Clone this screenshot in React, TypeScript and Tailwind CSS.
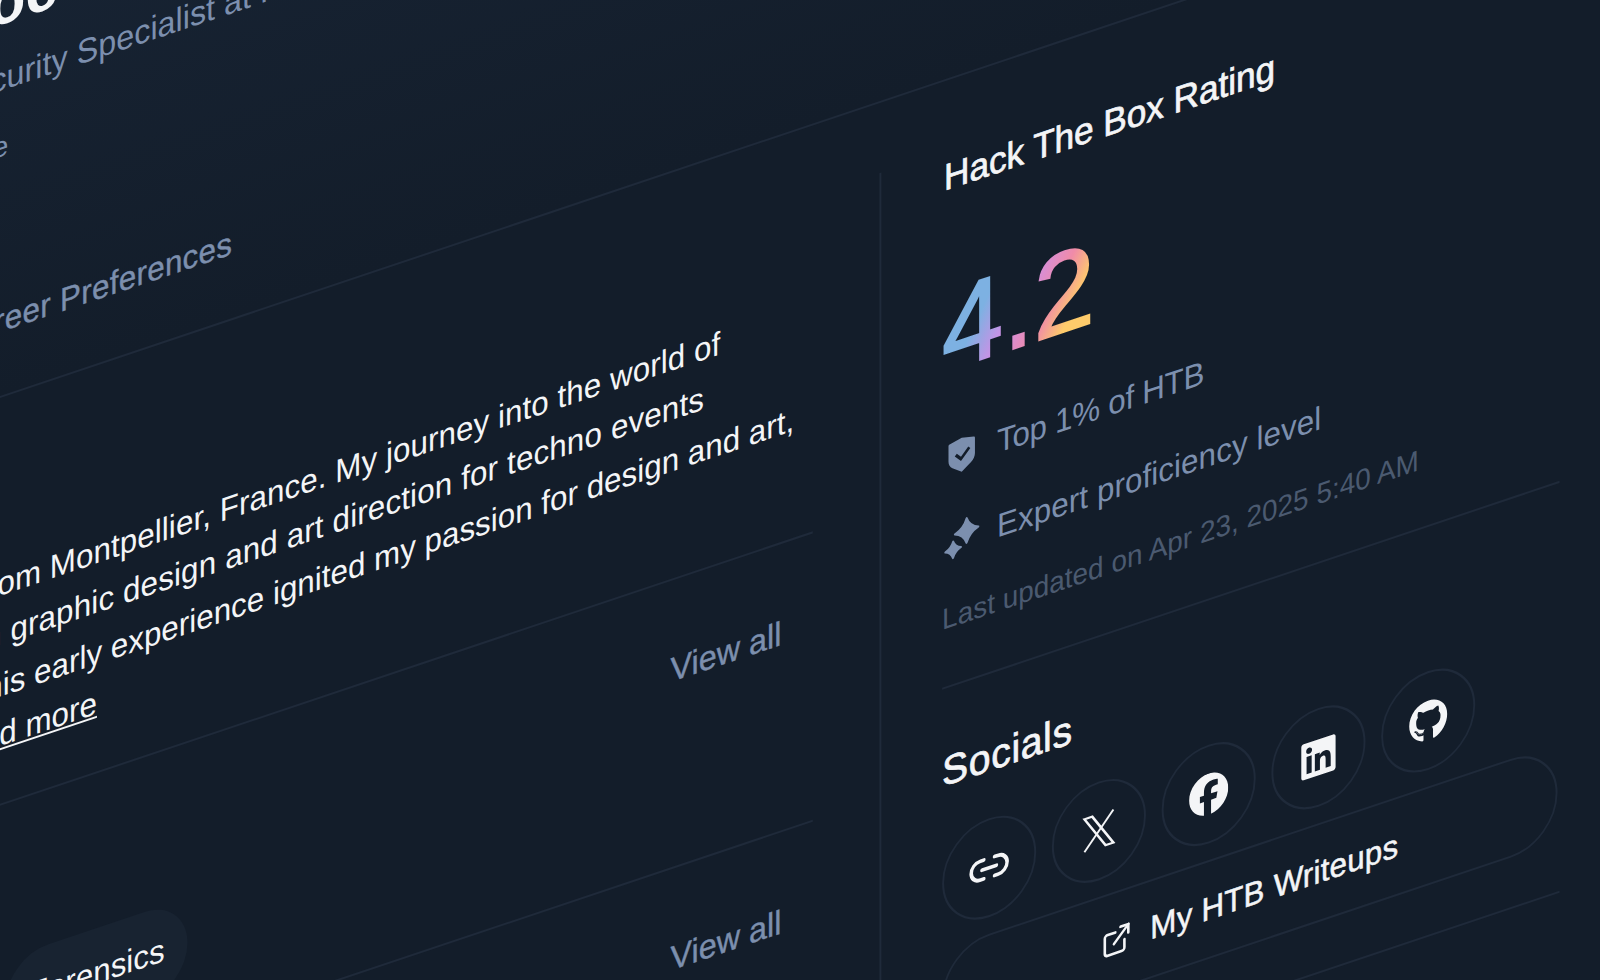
import { ExternalLink, Info, Link2 } from "lucide-react";
import { FaFacebook, FaGithub, FaLinkedin } from "react-icons/fa6";
import { RiShieldCheckFill } from "react-icons/ri";

function Sparkles() {
  return (
    <svg width="20" height="20" viewBox="0 0 20 20" fill="currentColor" stroke="currentColor" strokeWidth="1" strokeLinejoin="round">
      <path d="M12.5 0.6 Q14 5.1 18.5 6.6 Q14 8.1 12.5 12.6 Q11 8.1 6.5 6.6 Q11 5.1 12.5 0.6Z" />
      <path d="M5.6 9.8 Q6.6 12.8 9.6 13.8 Q6.6 14.8 5.6 17.8 Q4.6 14.8 1.6 13.8 Q4.6 12.8 5.6 9.8Z" />
    </svg>
  );
}

function XLogo() {
  return (
    <svg width="20" height="20" viewBox="0 0 20 20" fill="none" stroke="currentColor" strokeWidth="1.1" strokeLinejoin="miter">
      <path d="M2.6 2 H6.6 L17.4 18 H13.4 Z" />
      <path d="M2.6 18 L17.4 2" />
    </svg>
  );
}

function SectionHeader({ title }: { title: string }) {
  return (
    <div className="flex h-7 items-center justify-between pr-4">
      <h3 className="text-lg [-webkit-text-stroke:0.35px] text-[#f4f5f7]">{title}</h3>
      <a className="mt-px text-[16.5px] leading-5 [-webkit-text-stroke:0.2px] text-[#7c8fae]">View all</a>
    </div>
  );
}

const socials = [
  <Link2 key="l" size={22} strokeWidth={2} />,
  <XLogo key="x" />,
  <FaFacebook key="f" size={20} />,
  <FaLinkedin key="i" size={20} />,
  <FaGithub key="g" size={20} />,
];

export default function App() {
  return (
    <div className="h-[980px] w-[1600px] overflow-hidden bg-[#131d2a] font-['Liberation_Sans',sans-serif] text-[#f4f5f7]">
      <div className="w-[870px] origin-top-left [transform:matrix(1.96,-0.657,0,2.06,-130,11)]">
        <header className="bg-gradient-to-b from-[#172333] to-[#131d2a]">
          <h1 className="pl-[6px] text-3xl font-semibold leading-9">J. Doe</h1>
          <p className="mt-[6px] text-[16.5px] leading-6 text-[#7c8fae]">Cybersecurity Specialist at Hack The Box</p>
          <p className="mt-[11px] pl-[27px] text-sm leading-5 text-[#7c8fae]">France</p>
          <nav className="mt-[63px] flex gap-5 pb-6 text-base leading-6 tracking-[0.15px] [-webkit-text-stroke:0.2px] text-[#7c8fae]">
            <span>CV</span>
            <span>Career Preferences</span>
          </nav>
        </header>
        <div className="border-t border-[#1f2a3a] pt-[33.5px]">
          <div className="flex">
            <main className="w-[516px] shrink-0 border-r border-[#1f2a3a] pr-[34px]">
              <section className="border-b border-[#1f2a3a] pb-[20.5px]">
                <h3 className="h-[26.5px] text-lg [-webkit-text-stroke:0.35px]">About</h3>
                <div className="mt-[18.5px] text-base leading-[24.5px] whitespace-nowrap text-[#f4f5f7]">
                  <p className="pl-[2.5px] tracking-[0.03px]">I come from Montpellier, France. My journey into the world of</p>
                  <p className="pl-[0.6px] tracking-[0.07px]">started in graphic design and art direction for techno events</p>
                  <p className="pl-1">Paris. This early experience ignited my passion for design and art,</p>
                  <p className="pl-[5.5px]">and <a className="underline">Read more</a></p>
                </div>
              </section>
              <section className="border-b border-[#1f2a3a] pt-7 pb-5">
                <SectionHeader title="Skills" />
                <div className="mt-[19px] flex gap-2 text-base">
                  <span className="flex h-11 w-[61px] items-center justify-center rounded-full bg-[#182331]">Web</span>
                  <span className="flex h-11 items-center rounded-full bg-[#182331] px-3">Forensics</span>
                </div>
              </section>
              <section className="pt-7">
                <SectionHeader title="Tools" />
              </section>
            </main>
            <aside className="-mt-[1.5px] w-[346px] shrink-0 pl-[31px]">
              <div className="border-b border-[#1f2a3a] pb-[23px]">
                <div className="flex h-7 items-center justify-between">
                  <h3 className="mt-[2px] pl-px text-lg tracking-[-0.05px] [-webkit-text-stroke:0.35px]">Hack The Box Rating</h3>
                  <Info size={20} className="text-[#f4f5f7]" />
                </div>
                <div className="mt-[34px] inline-block bg-[linear-gradient(120deg,#7db1e2_30%,#cf8fe6_48%,#f08ba8_66%,#fecb6b_80%)] bg-clip-text text-[56px] leading-none text-transparent [-webkit-text-stroke:1px_transparent]">
                  4.2
                </div>
                <div className="mt-[23.5px] flex flex-col gap-[21px] text-base leading-5 text-[#7c8fae]">
                  <div className="flex items-center gap-2">
                    <span className="flex w-5 justify-center"><RiShieldCheckFill size={18} /></span>
                    <span className="tracking-[-0.15px]">Top 1% of HTB</span>
                  </div>
                  <div className="flex items-center gap-2">
                    <span className="flex w-5 justify-center"><Sparkles /></span>
                    <span className="tracking-[0.04px]">Expert proficiency level</span>
                  </div>
                </div>
                <p className="mt-[16.5px] text-[14.25px] leading-5 text-[#4b5a70]">Last updated on Apr 23, 2025 5:40 AM</p>
              </div>
              <div className="border-b border-[#1f2a3a] pt-[26px] pb-6">
                <h3 className="text-xl leading-7 tracking-[0.3px] [-webkit-text-stroke:0.35px]">Socials</h3>
                <div className="mt-4 flex gap-2">
                  {socials.map((icon) => (
                    <a key={icon.key} className="flex h-12 w-12 items-center justify-center rounded-full border border-[#1f2a3a]">
                      {icon}
                    </a>
                  ))}
                </div>
                <a className="mt-2 mr-[1.5px] flex h-12 items-center justify-center gap-[9.5px] rounded-full border border-[#1f2a3a] text-base tracking-[0.1px] [-webkit-text-stroke:0.25px]">
                  <ExternalLink size={16} />
                  My HTB Writeups
                </a>
              </div>
            </aside>
          </div>
        </div>
      </div>
    </div>
  );
}
